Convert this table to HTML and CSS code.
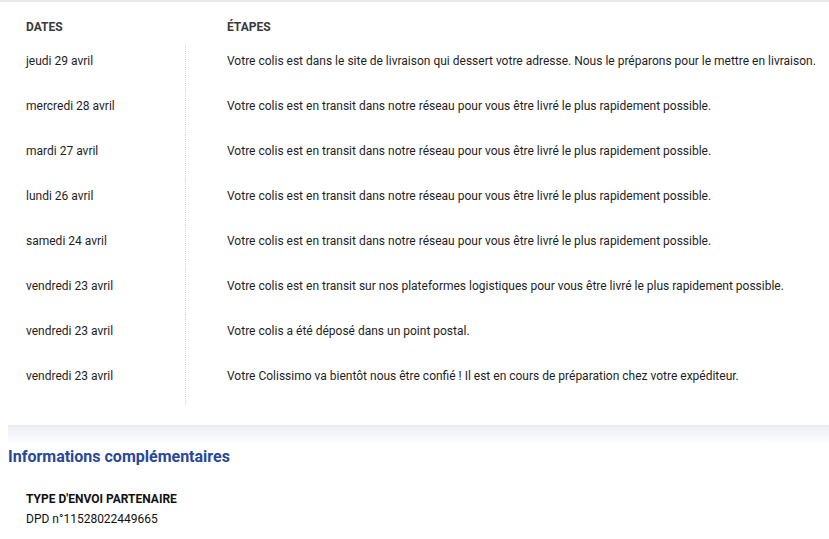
FILE: index.html
```html
<!DOCTYPE html>
<html lang="fr">
<head>
<meta charset="utf-8">
<link rel="stylesheet" href="styles.css">
</head>
<body>
<div class="page">
  <div class="timeline">
    <div class="head">
      <div class="col-date">DATES</div>
      <div class="col-step">ÉTAPES</div>
    </div>
    <div class="rows">
      <div class="row"><div class="col-date">jeudi 29 avril</div><div class="col-step">Votre colis est dans le site de livraison qui dessert votre adresse. Nous le préparons pour le mettre en livraison.</div></div>
      <div class="row"><div class="col-date">mercredi 28 avril</div><div class="col-step">Votre colis est en transit dans notre réseau pour vous être livré le plus rapidement possible.</div></div>
      <div class="row"><div class="col-date">mardi 27 avril</div><div class="col-step">Votre colis est en transit dans notre réseau pour vous être livré le plus rapidement possible.</div></div>
      <div class="row"><div class="col-date">lundi 26 avril</div><div class="col-step">Votre colis est en transit dans notre réseau pour vous être livré le plus rapidement possible.</div></div>
      <div class="row"><div class="col-date">samedi 24 avril</div><div class="col-step">Votre colis est en transit dans notre réseau pour vous être livré le plus rapidement possible.</div></div>
      <div class="row"><div class="col-date">vendredi 23 avril</div><div class="col-step">Votre colis est en transit sur nos plateformes logistiques pour vous être livré le plus rapidement possible.</div></div>
      <div class="row"><div class="col-date">vendredi 23 avril</div><div class="col-step">Votre colis a été déposé dans un point postal.</div></div>
      <div class="row"><div class="col-date">vendredi 23 avril</div><div class="col-step">Votre Colissimo va bientôt nous être confié ! Il est en cours de préparation chez votre expéditeur.</div></div>
    </div>
  </div>
  <div class="separator"></div>
  <h2 class="info-title">Informations complémentaires</h2>
  <div class="info">
    <div class="info-label">TYPE D'ENVOI PARTENAIRE</div>
    <div class="info-value">DPD n°11528022449665</div>
  </div>
</div>
</body>
</html>
```
FILE: styles.css
```css
* { box-sizing: border-box; }
html, body { margin: 0; padding: 0; background: #fff; }
body {
  font-family: Roboto, "Liberation Sans", sans-serif;
  font-size: 12px;
  color: #1e1e1e;
}
.page {
  border-top: 2px solid #e8e8e8;
}
.timeline {
  padding-left: 26px;
}
.head {
  display: flex;
  padding-top: 17px;
  padding-bottom: 10px;
  line-height: 16px;
  font-weight: 700;
  color: #3a3a3a;
}
.col-date {
  width: 160px;
  flex: none;
}
.col-step {
  padding-left: 41px;
}
.rows {
  display: flex;
  flex-direction: column;
}
.row {
  display: flex;
  height: 45px;
  line-height: 16px;
}
.row .col-date {
  padding-top: 8px;
  border-right: 1px dotted #d6d6d6;
}
.row .col-step {
  padding-top: 8px;
}
.separator {
  position: relative;
  margin: 20px 0 0 8px;
  height: 2px;
  background: #ebebeb;
}
.separator::after {
  content: "";
  position: absolute;
  left: 0; right: 0; top: 2px;
  height: 18px;
  background: linear-gradient(to bottom, rgba(236,238,244,0.9), rgba(255,255,255,0));
}
.info-title {
  margin: 20px 0 0 8px;
  font-size: 16px;
  line-height: 20px;
  font-weight: 700;
  color: #28489a;
}
.info {
  padding: 22px 0 0 26px;
  line-height: 20px;
}
.info-label {
  font-weight: 700;
  color: #111;
}
.info-value {
  color: #111;
}
```
